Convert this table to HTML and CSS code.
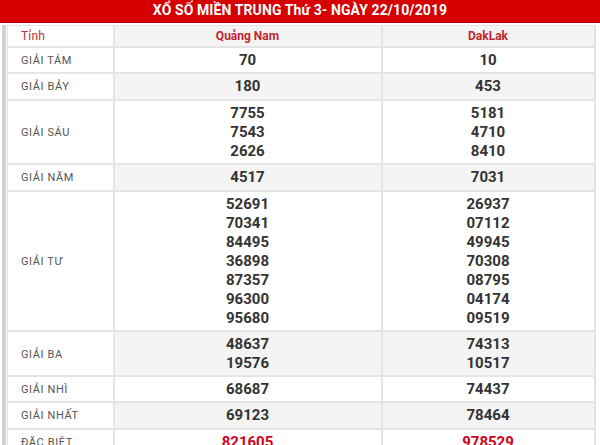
FILE: index.html
```html
<!DOCTYPE html>
<html lang="vi">
<head>
<meta charset="utf-8">
<title>XSMT</title>
<link rel="stylesheet" href="styles.css">
</head>
<body>
<div class="banner">XỔ SỐ MIỀN TRUNG Thứ 3- NGÀY 22/10/2019</div>
<div class="main">
  <div class="rail"></div>
  <table class="kq">
    <colgroup><col class="c1"><col class="c2"><col class="c3"></colgroup>
    <thead>
      <tr class="head"><th class="lbl">Tỉnh</th><th>Quảng Nam</th><th>DakLak</th></tr>
    </thead>
    <tbody>
      <tr><td class="lbl">GIẢI TÁM</td><td>70</td><td>10</td></tr>
      <tr class="alt tall"><td class="lbl">GIẢI BẢY</td><td>180</td><td>453</td></tr>
      <tr><td class="lbl">GIẢI SÁU</td><td>7755<br>7543<br>2626</td><td>5181<br>4710<br>8410</td></tr>
      <tr class="alt tall"><td class="lbl">GIẢI NĂM</td><td>4517</td><td>7031</td></tr>
      <tr><td class="lbl">GIẢI TƯ</td><td>52691<br>70341<br>84495<br>36898<br>87357<br>96300<br>95680</td><td>26937<br>07112<br>49945<br>70308<br>08795<br>04174<br>09519</td></tr>
      <tr class="alt"><td class="lbl">GIẢI BA</td><td>48637<br>19576</td><td>74313<br>10517</td></tr>
      <tr><td class="lbl">GIẢI NHÌ</td><td>68687</td><td>74437</td></tr>
      <tr class="alt tall"><td class="lbl">GIẢI NHẤT</td><td>69123</td><td>78464</td></tr>
      <tr class="db"><td class="lbl">ĐẶC BIỆT</td><td>821605</td><td>978529</td></tr>
    </tbody>
  </table>
</div>
</body>
</html>
```
FILE: styles.css
```css
html, body {
  margin: 0;
  padding: 0;
  background: #ffffff;
  overflow: hidden;
}
body {
  width: 600px;
  height: 445px;
  font-family: Roboto, "Open Sans", "Liberation Sans", sans-serif;
}
.banner {
  height: 23px;
  line-height: 21px;
  background: #d60000;
  border-bottom: 1px solid #b80000;
  box-sizing: border-box;
  color: #ffffff;
  font-weight: 700;
  font-size: 14px;
  text-align: center;
  letter-spacing: 0.1px;
}
.main {
  display: flex;
  padding-top: 2px;
  height: 420px;
}
.rail {
  margin-left: 2px;
  width: 4px;
  background: #d2d2d2;
  flex: none;
}
.kq {
  margin-left: 1px;
  width: 587px;
  border-collapse: collapse;
  table-layout: fixed;
  border-left: 1px solid #e2e2e2;
  border-right: 2px solid #e2e2e2;
  border-top: 1px solid #e6e6e6;
  align-self: flex-start;
}
.c1 { width: 106px; }
.c2 { width: 268px; }
.c3 { width: 213px; }
.kq th, .kq td {
  border-bottom: 2px solid #e4e4e4;
  border-left: 2px solid #e4e4e4;
  padding: 3px 0 2px;
  text-align: center;
  line-height: 19px;
  font-size: 15px;
  font-weight: 700;
  color: #333333;
}
.kq tr.tall td { padding-bottom: 3px; }
.kq td:nth-child(2), .kq td:nth-child(3) { background: #ffffff; }
.kq tr.alt td:nth-child(2), .kq tr.alt td:nth-child(3) { background: #f4f4f4; }
.kq .head th {
  font-size: 12px;
  line-height: 15px;
  padding: 3px 0 2px;
  color: #c0272d;
  background: #f4f4f4;
}
.kq td.lbl, .kq th.lbl {
  text-align: left;
  padding-left: 13px;
  font-size: 11px;
  font-weight: 400;
  color: #555555;
  letter-spacing: 0.6px;
  border-left: none;
}
.kq .head th.lbl {
  background: #ffffff;
  color: #b5333a;
  font-size: 12px;
  letter-spacing: 0.2px;
}
.kq tr.db td { color: #d0021b; }
.kq tr.db td.lbl { color: #555555; }
```
